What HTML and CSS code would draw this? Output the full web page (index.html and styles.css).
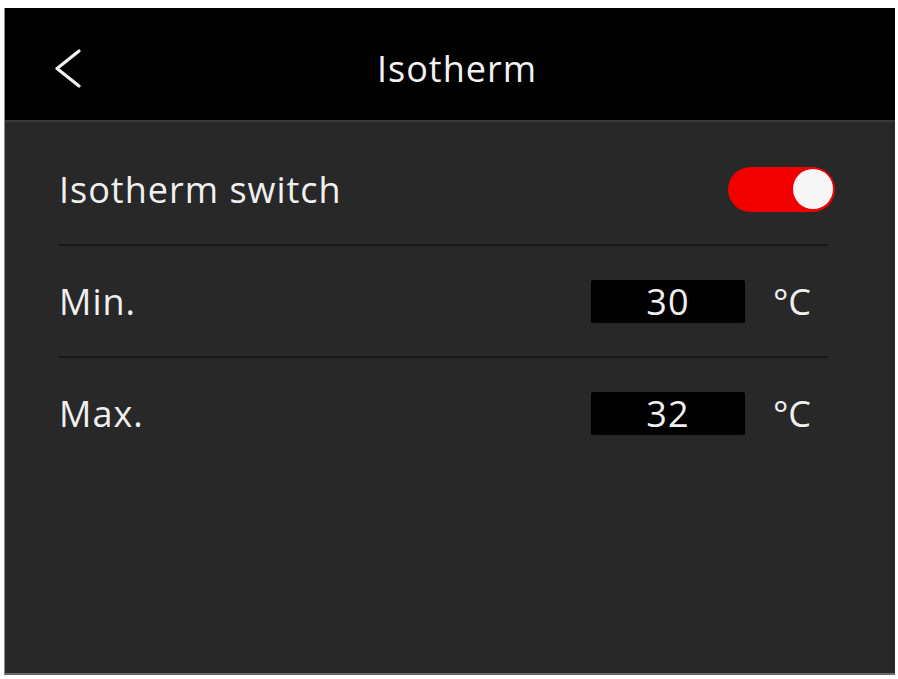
FILE: index.html
```html
<!DOCTYPE html>
<html>
<head>
<meta charset="utf-8">
<link rel="stylesheet" href="styles.css">
</head>
<body>
<div class="screen">
  <header class="topbar">
    <svg class="back" width="28" height="40" viewBox="0 0 28 40"><polyline points="25,2 3,19.5 25,37" fill="none" stroke="#f2f2f2" stroke-width="3.2" stroke-linecap="round" stroke-linejoin="round"/></svg>
    <h1 class="title">Isotherm</h1>
  </header>
  <main class="content">
    <div class="row">
      <span class="label">Isotherm switch</span>
      <span class="toggle"><span class="knob"></span></span>
    </div>
    <div class="row">
      <span class="label">Min.</span>
      <span class="value">30</span>
      <span class="unit">°C</span>
    </div>
    <div class="row last">
      <span class="label">Max.</span>
      <span class="value">32</span>
      <span class="unit">°C</span>
    </div>
  </main>
</div>
</body>
</html>
```
FILE: styles.css
```css
html, body {
  margin: 0;
  padding: 0;
  background: #ffffff;
}
body {
  font-family: "Open Sans", "Noto Sans", sans-serif;
  color: #f0f0f0;
}
.screen {
  margin: 8px 3px 0 4px;
  width: 891px;
  height: 667px;
  background: #282828;
  border-left: 1px solid #8a8a8a;
  border-bottom: 2px solid #6a6a6a;
  box-sizing: border-box;
  display: flex;
  flex-direction: column;
}
.topbar {
  height: 114px;
  background: #000;
  border-bottom: 2px solid #3a3a3a;
  box-sizing: border-box;
  position: relative;
  display: flex;
  align-items: center;
  justify-content: center;
  padding-top: 10px;
}
.back {
  position: absolute;
  left: 49px;
  top: 41px;
}
.title {
  margin: 0 0 0 14px;
  font-weight: 400;
  font-size: 36px;
  letter-spacing: 1px;
  line-height: 48px;
  color: #f2f2f2;
}
.content {
  padding: 12px 67px 0 54px;
}
.row {
  height: 110px;
  border-bottom: 2px solid #171717;
  display: flex;
  align-items: center;
}
.row.last {
  border-bottom: none;
}
.label {
  flex: 1;
  font-size: 36px;
  letter-spacing: 1px;
  line-height: 48px;
  padding-top: 2px;
}
.toggle {
  width: 107px;
  height: 45px;
  border-radius: 23px;
  background: #f20000;
  margin-right: -7px;
  display: flex;
  align-items: center;
  justify-content: flex-end;
  padding-right: 2px;
  box-sizing: border-box;
}
.knob {
  width: 40px;
  height: 40px;
  border-radius: 50%;
  background: #f7f7f7;
}
.value {
  width: 154px;
  height: 43px;
  background: #000;
  border-radius: 2px;
  font-size: 36px;
  letter-spacing: 1px;
  line-height: 43px;
  text-align: center;
  margin-right: 28px;
}
.unit {
  font-size: 36px;
  line-height: 48px;
  margin-right: 17px;
  padding-top: 2px;
}
```
